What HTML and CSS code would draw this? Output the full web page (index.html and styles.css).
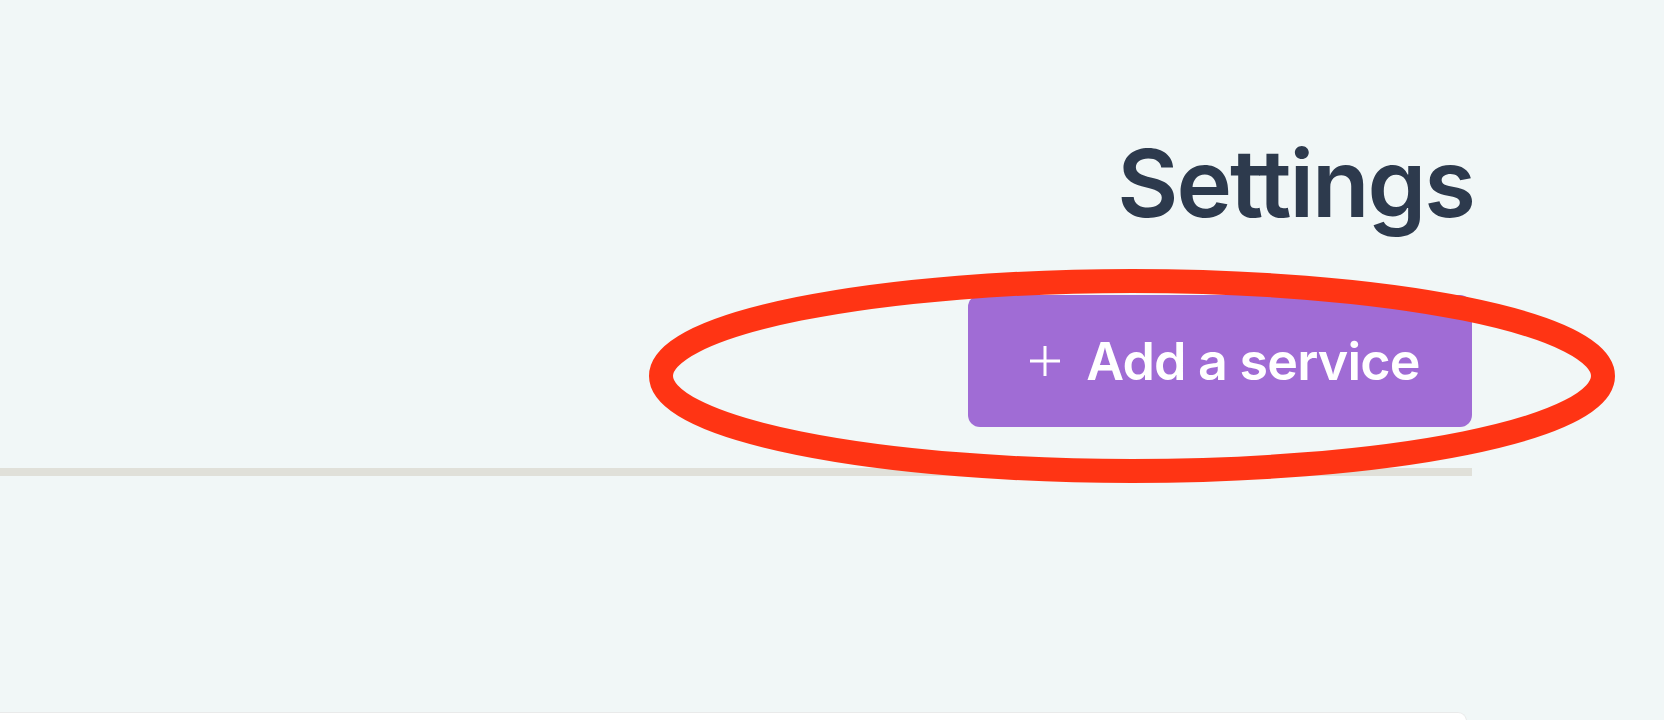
FILE: index.html
```html
<!DOCTYPE html>
<html lang="en">
<head>
<meta charset="utf-8">
<title>Settings</title>
<link rel="stylesheet" href="styles.css">
</head>
<body>
<div class="page">
  <header class="header">
    <h1 class="title">Settings</h1>
    <div class="actions">
      <button class="add-btn" type="button">
        <svg class="plus" width="30" height="32" viewBox="0 0 30 32" aria-hidden="true">
          <path d="M15 1v30M0 16h30" stroke="#fff" stroke-width="3" fill="none"/>
        </svg>
        <span>Add a service</span>
      </button>
    </div>
    <div class="divider"></div>
  </header>
  <section class="card"></section>
</div>
<svg class="annotation" width="1664" height="720" viewBox="0 0 1664 720" aria-hidden="true">
  <ellipse cx="1132" cy="376" rx="471" ry="95" fill="none" stroke="#ff3414" stroke-width="24"/>
</svg>
</body>
</html>
```
FILE: styles.css
```css
html, body {
  margin: 0;
  padding: 0;
}
body {
  width: 1664px;
  height: 720px;
  overflow: hidden;
  background: #f1f7f7;
  font-family: Inter, "Noto Sans", sans-serif;
  position: relative;
}
.page {
  width: 1472px;
  padding-top: 127px;
  display: flex;
  flex-direction: column;
}
.header {
  display: flex;
  flex-direction: column;
  align-items: flex-end;
}
.title {
  margin: 0 -2px 0 0;
  font-size: 94px;
  line-height: 113px;
  font-weight: 600;
  color: #2d3a4d;
  letter-spacing: -2px;
}
.actions {
  margin-top: 55px;
  display: flex;
  justify-content: flex-end;
}
.add-btn {
  width: 504px;
  height: 132px;
  border: none;
  border-radius: 12px;
  background: #a06cd5;
  color: #fff;
  font-family: Inter, "Noto Sans", sans-serif;
  font-size: 52px;
  font-weight: 600;
  letter-spacing: -0.8px;
  display: flex;
  align-items: center;
  justify-content: center;
  gap: 26px;
  padding: 0 0 0 10px;
}
.plus {
  display: block;
  flex: none;
}
.divider {
  margin-top: 41px;
  align-self: stretch;
  height: 8px;
  background: #e0e0d9;
}
.card {
  flex: none;
  margin-top: 236px;
  margin-left: -12px;
  width: 1477px;
  height: 8px;
  background: #fff;
  border: 1px solid #e9eaea;
  border-bottom: none;
  border-radius: 10px 10px 0 0;
}
.annotation {
  position: absolute;
  left: 0;
  top: 0;
  pointer-events: none;
}
```
